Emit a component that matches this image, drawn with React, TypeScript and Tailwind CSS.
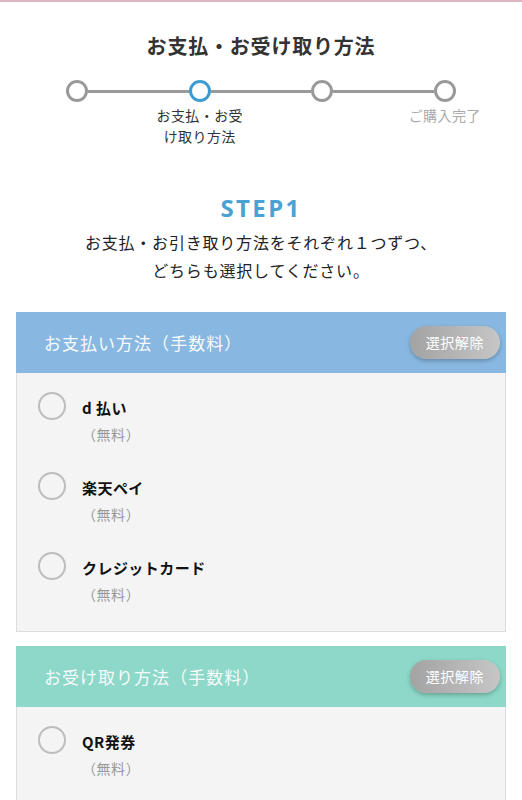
import React from "react";

type Option = { name: string; fee: string };

const payments: Option[] = [
  { name: "d 払い", fee: "（無料）" },
  { name: "楽天ペイ", fee: "（無料）" },
  { name: "クレジットカード", fee: "（無料）" },
];

const receipts: Option[] = [{ name: "QR発券", fee: "（無料）" }];

function StepDot({ active }: { active?: boolean }) {
  return (
    <div
      className={`h-[22px] w-[22px] shrink-0 rounded-full border-[3px] bg-white ${
        active ? "border-[#3d9bd3]" : "border-[#999999]"
      }`}
    />
  );
}

function Section({ title, color, options }: { title: string; color: string; options: Option[] }) {
  return (
    <section className="mx-4">
      <div className={`flex h-[61px] items-center justify-between pl-[28px] pr-[6px] ${color}`}>
        <h3 className="text-[17px] leading-6 tracking-[0.06em] text-[#f7fafc]">{title}</h3>
        <button className="h-[33px] rounded-full bg-gradient-to-r from-[#a3a3a3] to-[#c6c6c6] px-[16px] text-[14px] tracking-[0.04em] text-white shadow-[0_2px_4px_rgba(0,0,0,0.25)]">
          選択解除
        </button>
      </div>
      <ul className="border-x border-b border-[#dddddd] bg-[#f4f4f4] pb-[26px] pt-[24px]">
        {options.map((o, i) => (
          <li key={o.name} className={`flex items-start pl-[21px] ${i > 0 ? "mt-[32px]" : ""}`}>
            <span className="-mt-[5px] h-[28px] w-[28px] shrink-0 rounded-full border-2 border-[#bdbdbd]" />
            <div className="ml-[16px]">
              <p className="text-[15px] font-bold leading-[22px] tracking-[0.03em] text-[#111]">{o.name}</p>
              <p className="mt-[4px] text-[14px] leading-[22px] tracking-[0.04em] text-[#999]">{o.fee}</p>
            </div>
          </li>
        ))}
      </ul>
    </section>
  );
}

export default function App() {
  return (
    <div className="min-h-screen bg-white font-['Noto_Sans_CJK_JP','Noto_Sans',sans-serif]">
      <div className="h-[2px] bg-[#dcb8c4]" />

      <h1 className="mt-[30px] text-center text-[20px] font-bold leading-[28px] tracking-[0.04em] text-[#333]">
        お支払・お受け取り方法
      </h1>

      <div className="mx-4 mt-[20px] flex items-center px-[50px]">
        <StepDot />
        <div className="h-[3px] flex-1 bg-[#999999]" />
        <StepDot active />
        <div className="h-[3px] flex-1 bg-[#999999]" />
        <StepDot />
        <div className="h-[3px] flex-1 bg-[#999999]" />
        <StepDot />
      </div>
      <div className="mx-4 mt-[3px] grid grid-cols-4 text-center text-[14px] leading-[21px] tracking-[0.03em]">
        <div />
        <div className="text-[#333]">
          お支払・お受
          <br />
          け取り方法
        </div>
        <div />
        <div className="text-[#aaaaaa]">ご購入完了</div>
      </div>

      <h2 className="mt-[46px] text-center font-['Noto_Sans',sans-serif] text-[24px] font-bold leading-[30px] tracking-[0.1em] text-[#4aa2d2]">
        STEP1
      </h2>
      <p className="mt-[5px] text-center text-[16px] leading-[28px] tracking-[0.05em] text-[#222]">
        お支払・お引き取り方法をそれぞれ１つずつ、
        <br />
        どちらも選択してください。
      </p>

      <div className="mt-[28px]">
        <Section title="お支払い方法（手数料）" color="bg-[#88b8e1]" options={payments} />
      </div>
      <div className="mt-[14px]">
        <Section title="お受け取り方法（手数料）" color="bg-[#8dd8c8]" options={receipts} />
      </div>
    </div>
  );
}
